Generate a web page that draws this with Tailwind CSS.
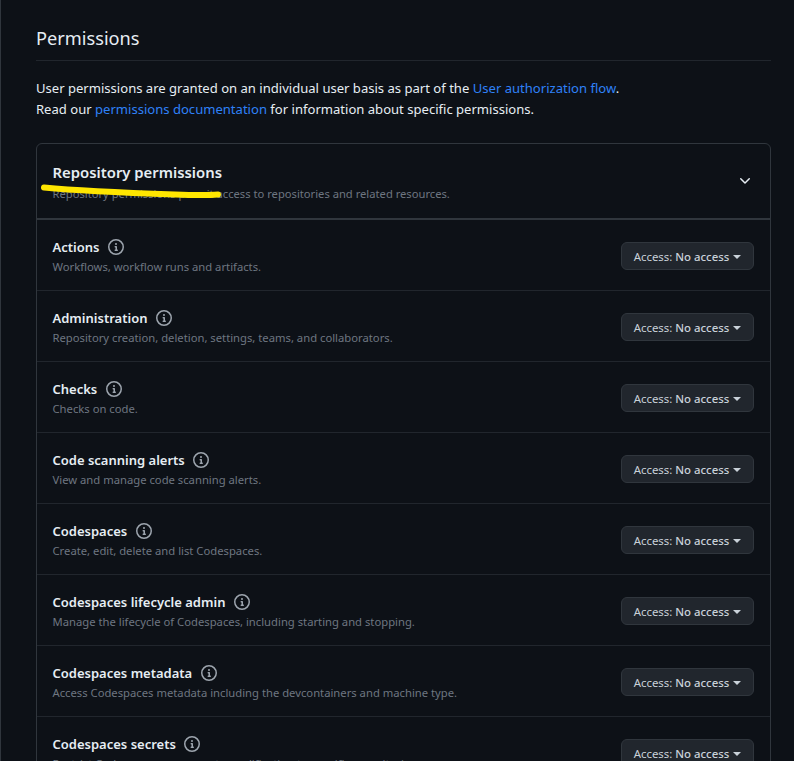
<!DOCTYPE html>
<html>
<head>
    <meta charset="UTF-8" />
    <title>Permissions</title>
    <script src="https://cdn.jsdelivr.net/npm/@tailwindcss/browser@4"></script>
</head>

<body class="bg-[#0d1117] h-screen overflow-hidden relative font-['Noto_Sans',sans-serif] text-[#e6edf3]">
    <div class="border-l border-[#30363d] h-full pl-[35px] pr-[23px]">
        <div class="pt-[24px] pb-[8px] border-b border-[#21262d] text-[18.2px] leading-[28px]">Permissions</div>

        <p class="mt-[17px] text-[13.07px] leading-[21px]">
            User permissions are granted on an individual user basis as part of the <a class="text-[#2f81f7]">User authorization flow</a>.<br>
            Read our <a class="text-[#2f81f7]">permissions documentation</a> for information about specific permissions.
        </p>

        <div class="mt-[23px] border border-[#30363d] rounded-t-md">
            <div class="flex items-center justify-between h-[76px] pl-[15.5px] pr-[17px] border-b-2 border-[#30363d]">
                <div class="self-start mt-[18px]">
                    <div class="text-[14.85px] leading-[20px] font-semibold">Repository permissions</div>
                    <div class="text-[11.2px] leading-[18px] text-[#6e7681] mt-[3px]">Repository permissions permit access to repositories and related resources.</div>
                </div>
                <svg class="w-[16px] h-[16px] fill-[#e6edf3]" viewBox="0 0 16 16"><path d="M12.78 5.22a.749.749 0 0 1 0 1.06l-4.25 4.25a.749.749 0 0 1-1.06 0L3.22 6.28a.749.749 0 1 1 1.06-1.06L8 8.939l3.72-3.719a.749.749 0 0 1 1.06 0Z"></path></svg>
            </div>

            <div class="flex items-start justify-between h-[71px] pt-[17px] pl-[15.5px] pr-[16px] border-b border-[#21262d]">
                <div>
                    <div class="flex items-center gap-[8.5px] text-[13px] leading-[20px] font-semibold">Actions
                        <svg class="w-[16px] h-[16px] fill-[#9da5ae]" viewBox="0 0 16 16"><path d="M0 8a8 8 0 1 1 16 0A8 8 0 0 1 0 8Zm8-6.5a6.5 6.5 0 1 0 0 13 6.5 6.5 0 0 0 0-13ZM6.5 7.75A.75.75 0 0 1 7.25 7h1a.75.75 0 0 1 .75.75v2.75h.25a.75.75 0 0 1 0 1.5h-2a.75.75 0 0 1 0-1.5h.25v-2h-.25a.75.75 0 0 1-.75-.75ZM8 6a1 1 0 1 1 0-2 1 1 0 0 1 0 2Z"></path></svg>
                    </div>
                    <div class="text-[11.25px] leading-[18px] text-[#6e7681] mt-[1px]">Workflows, workflow runs and artifacts.</div>
                </div>
                <button class="flex items-center justify-center gap-[4px] w-[133px] h-[28px] mt-[5px] pt-[1px] bg-[#21262d] border border-[#30363d] rounded-md text-[11.4px] text-[#c9d1d9]"><span>Access: <span class="font-medium">No access</span></span><span class="w-0 h-0 border-x-[4px] border-x-transparent border-t-[4px] border-t-[#c9d1d9]"></span></button>
            </div>

            <div class="flex items-start justify-between h-[71px] pt-[17px] pl-[15.5px] pr-[16px] border-b border-[#21262d]">
                <div>
                    <div class="flex items-center gap-[8.5px] text-[13px] leading-[20px] font-semibold">Administration
                        <svg class="w-[16px] h-[16px] fill-[#9da5ae]" viewBox="0 0 16 16"><path d="M0 8a8 8 0 1 1 16 0A8 8 0 0 1 0 8Zm8-6.5a6.5 6.5 0 1 0 0 13 6.5 6.5 0 0 0 0-13ZM6.5 7.75A.75.75 0 0 1 7.25 7h1a.75.75 0 0 1 .75.75v2.75h.25a.75.75 0 0 1 0 1.5h-2a.75.75 0 0 1 0-1.5h.25v-2h-.25a.75.75 0 0 1-.75-.75ZM8 6a1 1 0 1 1 0-2 1 1 0 0 1 0 2Z"></path></svg>
                    </div>
                    <div class="text-[11.25px] leading-[18px] text-[#6e7681] mt-[1px]">Repository creation, deletion, settings, teams, and collaborators.</div>
                </div>
                <button class="flex items-center justify-center gap-[4px] w-[133px] h-[28px] mt-[5px] pt-[1px] bg-[#21262d] border border-[#30363d] rounded-md text-[11.4px] text-[#c9d1d9]"><span>Access: <span class="font-medium">No access</span></span><span class="w-0 h-0 border-x-[4px] border-x-transparent border-t-[4px] border-t-[#c9d1d9]"></span></button>
            </div>

            <div class="flex items-start justify-between h-[71px] pt-[17px] pl-[15.5px] pr-[16px] border-b border-[#21262d]">
                <div>
                    <div class="flex items-center gap-[8.5px] text-[13px] leading-[20px] font-semibold">Checks
                        <svg class="w-[16px] h-[16px] fill-[#9da5ae]" viewBox="0 0 16 16"><path d="M0 8a8 8 0 1 1 16 0A8 8 0 0 1 0 8Zm8-6.5a6.5 6.5 0 1 0 0 13 6.5 6.5 0 0 0 0-13ZM6.5 7.75A.75.75 0 0 1 7.25 7h1a.75.75 0 0 1 .75.75v2.75h.25a.75.75 0 0 1 0 1.5h-2a.75.75 0 0 1 0-1.5h.25v-2h-.25a.75.75 0 0 1-.75-.75ZM8 6a1 1 0 1 1 0-2 1 1 0 0 1 0 2Z"></path></svg>
                    </div>
                    <div class="text-[11.25px] leading-[18px] text-[#6e7681] mt-[1px]">Checks on code.</div>
                </div>
                <button class="flex items-center justify-center gap-[4px] w-[133px] h-[28px] mt-[5px] pt-[1px] bg-[#21262d] border border-[#30363d] rounded-md text-[11.4px] text-[#c9d1d9]"><span>Access: <span class="font-medium">No access</span></span><span class="w-0 h-0 border-x-[4px] border-x-transparent border-t-[4px] border-t-[#c9d1d9]"></span></button>
            </div>

            <div class="flex items-start justify-between h-[71px] pt-[17px] pl-[15.5px] pr-[16px] border-b border-[#21262d]">
                <div>
                    <div class="flex items-center gap-[8.5px] text-[13px] leading-[20px] font-semibold">Code scanning alerts
                        <svg class="w-[16px] h-[16px] fill-[#9da5ae]" viewBox="0 0 16 16"><path d="M0 8a8 8 0 1 1 16 0A8 8 0 0 1 0 8Zm8-6.5a6.5 6.5 0 1 0 0 13 6.5 6.5 0 0 0 0-13ZM6.5 7.75A.75.75 0 0 1 7.25 7h1a.75.75 0 0 1 .75.75v2.75h.25a.75.75 0 0 1 0 1.5h-2a.75.75 0 0 1 0-1.5h.25v-2h-.25a.75.75 0 0 1-.75-.75ZM8 6a1 1 0 1 1 0-2 1 1 0 0 1 0 2Z"></path></svg>
                    </div>
                    <div class="text-[11.25px] leading-[18px] text-[#6e7681] mt-[1px]">View and manage code scanning alerts.</div>
                </div>
                <button class="flex items-center justify-center gap-[4px] w-[133px] h-[28px] mt-[5px] pt-[1px] bg-[#21262d] border border-[#30363d] rounded-md text-[11.4px] text-[#c9d1d9]"><span>Access: <span class="font-medium">No access</span></span><span class="w-0 h-0 border-x-[4px] border-x-transparent border-t-[4px] border-t-[#c9d1d9]"></span></button>
            </div>

            <div class="flex items-start justify-between h-[71px] pt-[17px] pl-[15.5px] pr-[16px] border-b border-[#21262d]">
                <div>
                    <div class="flex items-center gap-[8.5px] text-[13px] leading-[20px] font-semibold">Codespaces
                        <svg class="w-[16px] h-[16px] fill-[#9da5ae]" viewBox="0 0 16 16"><path d="M0 8a8 8 0 1 1 16 0A8 8 0 0 1 0 8Zm8-6.5a6.5 6.5 0 1 0 0 13 6.5 6.5 0 0 0 0-13ZM6.5 7.75A.75.75 0 0 1 7.25 7h1a.75.75 0 0 1 .75.75v2.75h.25a.75.75 0 0 1 0 1.5h-2a.75.75 0 0 1 0-1.5h.25v-2h-.25a.75.75 0 0 1-.75-.75ZM8 6a1 1 0 1 1 0-2 1 1 0 0 1 0 2Z"></path></svg>
                    </div>
                    <div class="text-[11.25px] leading-[18px] text-[#6e7681] mt-[1px]">Create, edit, delete and list Codespaces.</div>
                </div>
                <button class="flex items-center justify-center gap-[4px] w-[133px] h-[28px] mt-[5px] pt-[1px] bg-[#21262d] border border-[#30363d] rounded-md text-[11.4px] text-[#c9d1d9]"><span>Access: <span class="font-medium">No access</span></span><span class="w-0 h-0 border-x-[4px] border-x-transparent border-t-[4px] border-t-[#c9d1d9]"></span></button>
            </div>

            <div class="flex items-start justify-between h-[71px] pt-[17px] pl-[15.5px] pr-[16px] border-b border-[#21262d]">
                <div>
                    <div class="flex items-center gap-[8.5px] text-[13px] leading-[20px] font-semibold">Codespaces lifecycle admin
                        <svg class="w-[16px] h-[16px] fill-[#9da5ae]" viewBox="0 0 16 16"><path d="M0 8a8 8 0 1 1 16 0A8 8 0 0 1 0 8Zm8-6.5a6.5 6.5 0 1 0 0 13 6.5 6.5 0 0 0 0-13ZM6.5 7.75A.75.75 0 0 1 7.25 7h1a.75.75 0 0 1 .75.75v2.75h.25a.75.75 0 0 1 0 1.5h-2a.75.75 0 0 1 0-1.5h.25v-2h-.25a.75.75 0 0 1-.75-.75ZM8 6a1 1 0 1 1 0-2 1 1 0 0 1 0 2Z"></path></svg>
                    </div>
                    <div class="text-[11.25px] leading-[18px] text-[#6e7681] mt-[1px]">Manage the lifecycle of Codespaces, including starting and stopping.</div>
                </div>
                <button class="flex items-center justify-center gap-[4px] w-[133px] h-[28px] mt-[5px] pt-[1px] bg-[#21262d] border border-[#30363d] rounded-md text-[11.4px] text-[#c9d1d9]"><span>Access: <span class="font-medium">No access</span></span><span class="w-0 h-0 border-x-[4px] border-x-transparent border-t-[4px] border-t-[#c9d1d9]"></span></button>
            </div>

            <div class="flex items-start justify-between h-[71px] pt-[17px] pl-[15.5px] pr-[16px] border-b border-[#21262d]">
                <div>
                    <div class="flex items-center gap-[8.5px] text-[13px] leading-[20px] font-semibold">Codespaces metadata
                        <svg class="w-[16px] h-[16px] fill-[#9da5ae]" viewBox="0 0 16 16"><path d="M0 8a8 8 0 1 1 16 0A8 8 0 0 1 0 8Zm8-6.5a6.5 6.5 0 1 0 0 13 6.5 6.5 0 0 0 0-13ZM6.5 7.75A.75.75 0 0 1 7.25 7h1a.75.75 0 0 1 .75.75v2.75h.25a.75.75 0 0 1 0 1.5h-2a.75.75 0 0 1 0-1.5h.25v-2h-.25a.75.75 0 0 1-.75-.75ZM8 6a1 1 0 1 1 0-2 1 1 0 0 1 0 2Z"></path></svg>
                    </div>
                    <div class="text-[11.25px] leading-[18px] text-[#6e7681] mt-[1px]">Access Codespaces metadata including the devcontainers and machine type.</div>
                </div>
                <button class="flex items-center justify-center gap-[4px] w-[133px] h-[28px] mt-[5px] pt-[1px] bg-[#21262d] border border-[#30363d] rounded-md text-[11.4px] text-[#c9d1d9]"><span>Access: <span class="font-medium">No access</span></span><span class="w-0 h-0 border-x-[4px] border-x-transparent border-t-[4px] border-t-[#c9d1d9]"></span></button>
            </div>

            <div class="flex items-start justify-between h-[71px] pt-[17px] pl-[15.5px] pr-[16px] border-b border-[#21262d]">
                <div>
                    <div class="flex items-center gap-[8.5px] text-[13px] leading-[20px] font-semibold">Codespaces secrets
                        <svg class="w-[16px] h-[16px] fill-[#9da5ae]" viewBox="0 0 16 16"><path d="M0 8a8 8 0 1 1 16 0A8 8 0 0 1 0 8Zm8-6.5a6.5 6.5 0 1 0 0 13 6.5 6.5 0 0 0 0-13ZM6.5 7.75A.75.75 0 0 1 7.25 7h1a.75.75 0 0 1 .75.75v2.75h.25a.75.75 0 0 1 0 1.5h-2a.75.75 0 0 1 0-1.5h.25v-2h-.25a.75.75 0 0 1-.75-.75ZM8 6a1 1 0 1 1 0-2 1 1 0 0 1 0 2Z"></path></svg>
                    </div>
                    <div class="text-[11.25px] leading-[18px] text-[#6e7681] mt-[1px]">Restrict Codespaces user secrets modification to specific repositories.</div>
                </div>
                <button class="flex items-center justify-center gap-[4px] w-[133px] h-[28px] mt-[5px] pt-[1px] bg-[#21262d] border border-[#30363d] rounded-md text-[11.4px] text-[#c9d1d9]"><span>Access: <span class="font-medium">No access</span></span><span class="w-0 h-0 border-x-[4px] border-x-transparent border-t-[4px] border-t-[#c9d1d9]"></span></button>
            </div>
        </div>
    </div>

    <!-- yellow marker stroke drawn over the screenshot -->
    <svg class="absolute left-0 top-0 pointer-events-none" width="794" height="761"><path d="M44 187.5 C80 191 130 193 175 194.5 C190 195 205 195.5 218 194.5" fill="none" stroke="#ffe600" stroke-width="6" stroke-linecap="round"></path></svg>
</body>

</html>
